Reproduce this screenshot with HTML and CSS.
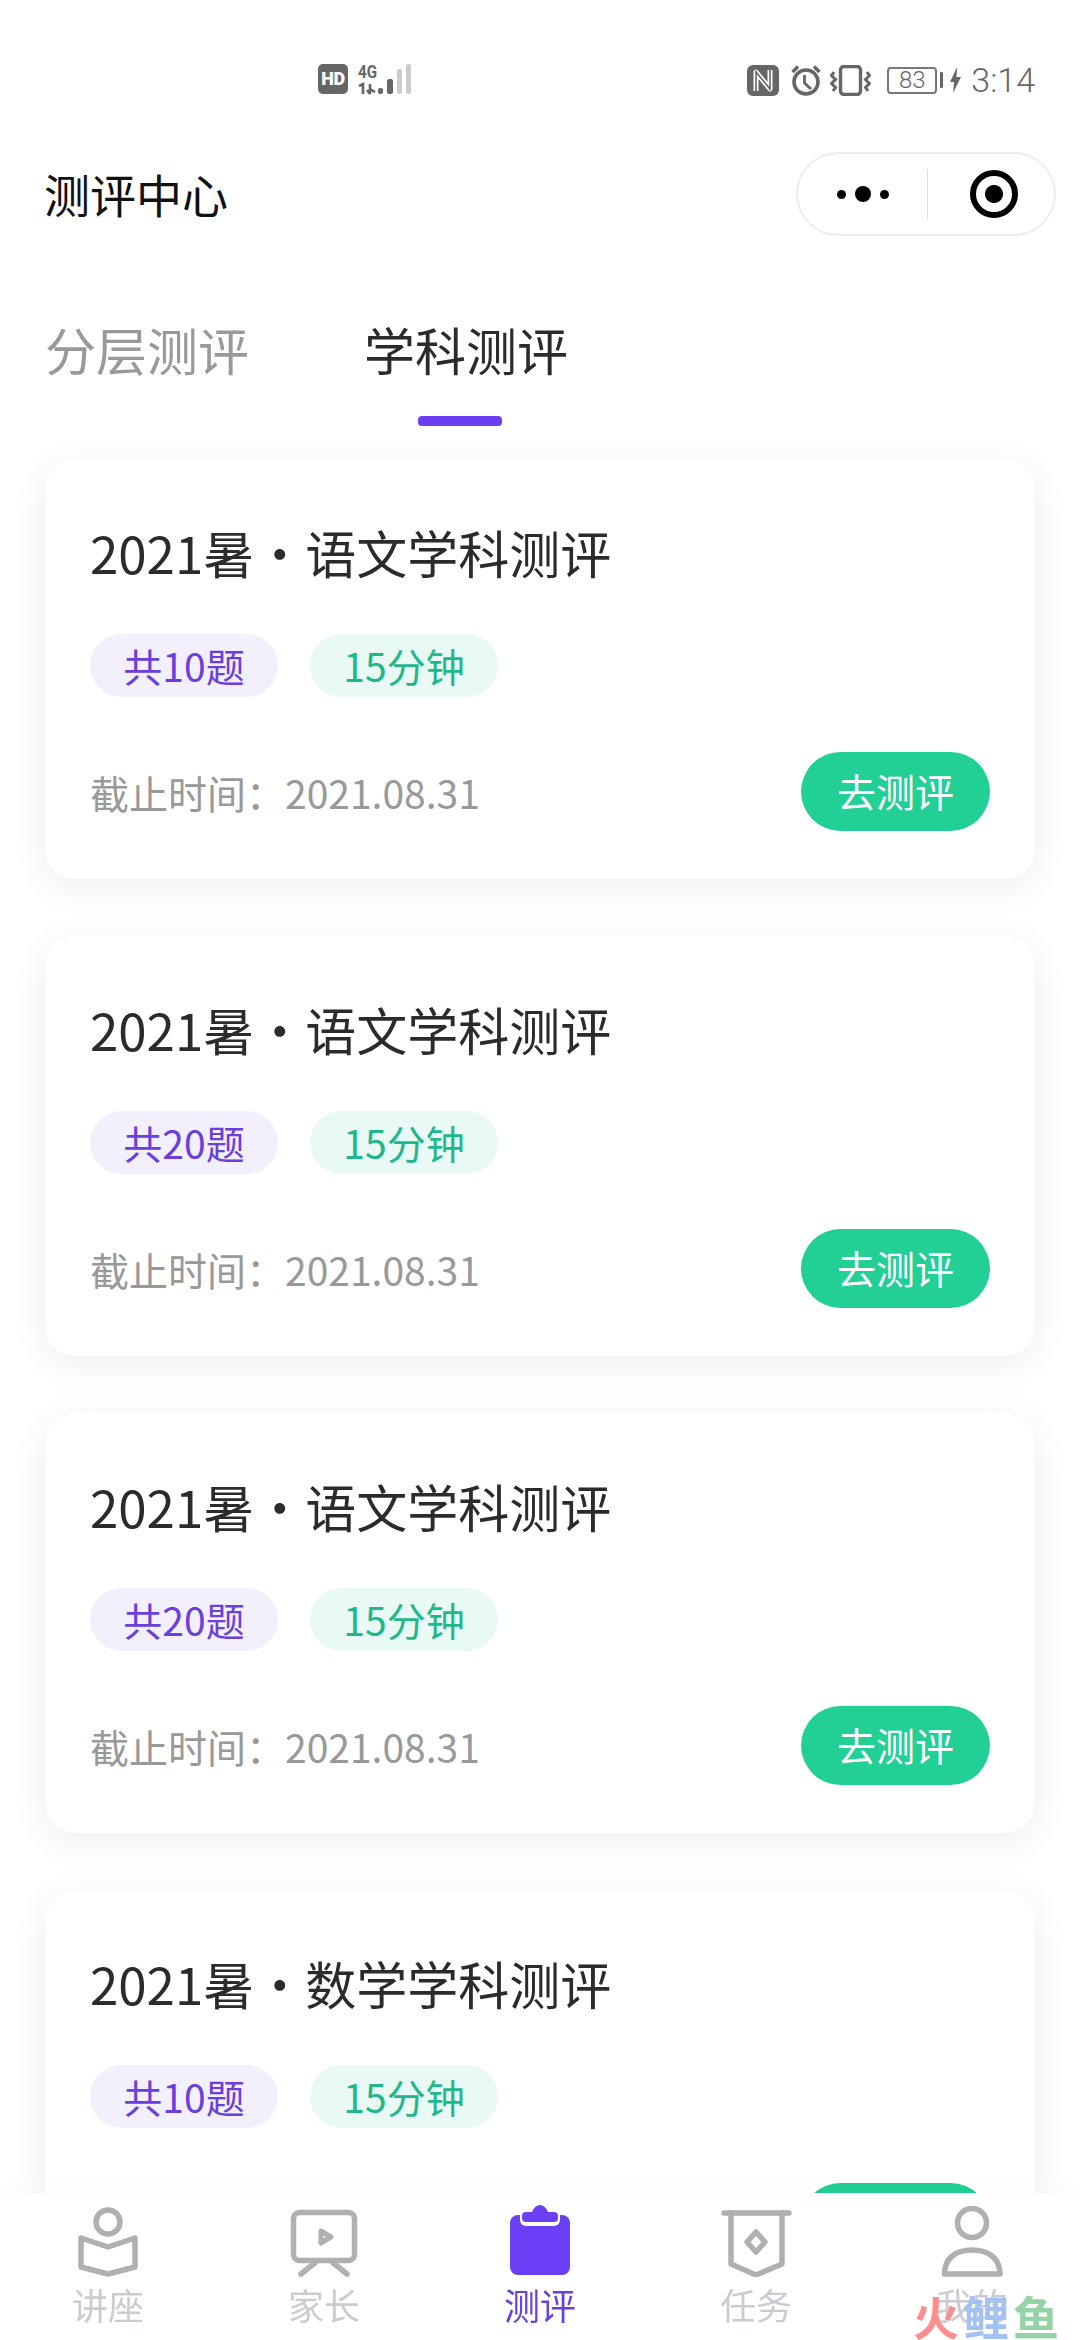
FILE: index.html
```html
<!DOCTYPE html>
<html lang="zh-CN">
  <head>
    <meta charset="UTF-8" />
    <meta name="viewport" content="width=device-width, initial-scale=1.0" />
    <title>测评中心</title>
    <link rel="stylesheet" href="styles.css">
  </head>
  <body>
    <div class="status-bar">
      <div class="status-left">
        <span class="hd-badge">HD</span>
        <svg class="signal" width="62" height="32" viewBox="0 0 62 32">
          <text class="signal-text" x="0" y="15" textLength="19" lengthAdjust="spacingAndGlyphs">4G</text>
          <path d="M1 23 L5 21 V31 M12 21 V31 M12 31 L9 27 M12 26 L17 29" fill="none" stroke="#666" stroke-width="2.6" />
          <rect x="20" y="25" width="5" height="6" rx="2" fill="#666" />
          <rect x="29" y="16" width="6" height="15" rx="2" fill="#666" />
          <rect x="39" y="6" width="5" height="25" rx="2" fill="#ccc" />
          <rect x="48" y="1" width="5" height="30" rx="2" fill="#ccc" />
        </svg>
      </div>
      <div class="status-right">
        <svg width="32" height="31" viewBox="0 0 32 31">
          <rect width="32" height="31" rx="6" fill="#666" />
          <path d="M9 26 V7 L23 24 V5" fill="none" stroke="#fff" stroke-width="5" stroke-linejoin="round" />
          <path d="M9 26 V7 L23 24 V5" fill="none" stroke="#666" stroke-width="1.6" />
        </svg>
        <svg width="30" height="31" viewBox="0 0 30 31">
          <circle cx="15" cy="17" r="12" fill="none" stroke="#666" stroke-width="3.6" />
          <path d="M13.5 10 V18 L20 24" fill="none" stroke="#666" stroke-width="2.8" />
          <path d="M1.5 7 L7 1.5 M28.5 7 L23 1.5" fill="none" stroke="#666" stroke-width="3.4" />
        </svg>
        <svg class="vibrate" width="41" height="31" viewBox="0 0 41 31">
          <rect x="10.5" y="1.5" width="20" height="28" rx="3.5" fill="none" stroke="#666" stroke-width="3.4" />
          <path d="M4 7 L1.5 10.5 L5.5 14.5 L1.5 18.5 L5.5 22.5 L3 26 M37 7 L39.5 10.5 L35.5 14.5 L39.5 18.5 L35.5 22.5 L38 26" fill="none" stroke="#666" stroke-width="3" />
        </svg>
        <div class="battery">
          <span class="battery-box">83</span>
          <span class="battery-nub"></span>
        </div>
        <svg class="bolt" width="11" height="26" viewBox="0 0 11 26">
          <path d="M7 0 L0 15 H4 L3 26 L11 10 H6.5 Z" fill="#666" />
        </svg>
        <span class="status-time">3:14</span>
      </div>
    </div>

    <div class="nav-bar">
      <div class="nav-title">测评中心</div>
      <div class="capsule">
        <div class="capsule-part">
          <span class="dot"></span>
          <span class="dot dot-big"></span>
          <span class="dot"></span>
        </div>
        <div class="capsule-part capsule-close">
          <span class="target"></span>
        </div>
      </div>
    </div>

    <div class="tabs">
      <div class="tab">分层测评</div>
      <div class="tab tab-active">学科测评</div>
    </div>

    <div class="card-list">
      <div class="card">
        <div class="card-title">2021暑・语文学科测评</div>
        <div class="card-tags">
          <span class="tag tag-purple">共10题</span>
          <span class="tag tag-green">15分钟</span>
        </div>
        <div class="card-footer">
          <span class="deadline">截止时间：2021.08.31</span>
          <span class="go-btn">去测评</span>
        </div>
      </div>

      <div class="card">
        <div class="card-title">2021暑・语文学科测评</div>
        <div class="card-tags">
          <span class="tag tag-purple">共20题</span>
          <span class="tag tag-green">15分钟</span>
        </div>
        <div class="card-footer">
          <span class="deadline">截止时间：2021.08.31</span>
          <span class="go-btn">去测评</span>
        </div>
      </div>

      <div class="card">
        <div class="card-title">2021暑・语文学科测评</div>
        <div class="card-tags">
          <span class="tag tag-purple">共20题</span>
          <span class="tag tag-green">15分钟</span>
        </div>
        <div class="card-footer">
          <span class="deadline">截止时间：2021.08.31</span>
          <span class="go-btn">去测评</span>
        </div>
      </div>

      <div class="card">
        <div class="card-title">2021暑・数学学科测评</div>
        <div class="card-tags">
          <span class="tag tag-purple">共10题</span>
          <span class="tag tag-green">15分钟</span>
        </div>
        <div class="card-footer">
          <span class="deadline">截止时间：2021.08.31</span>
          <span class="go-btn">去测评</span>
        </div>
      </div>
    </div>

    <div class="tab-bar">
      <div class="tab-item">
        <svg class="tab-icon" viewBox="0 0 72 72">
          <circle cx="36" cy="17" r="12" />
          <path d="M9 33 L36 42 L63 33 V62 L36 69 L9 62 Z" />
        </svg>
        <span>讲座</span>
      </div>
      <div class="tab-item">
        <svg class="tab-icon" viewBox="0 0 72 72">
          <rect x="5.5" y="7.5" width="61" height="48" rx="6" />
          <path class="thin" d="M33 26 L43 32 L33 38 Z" />
          <path d="M13 69 L28 57 M59 69 L44 57" />
        </svg>
        <span>家长</span>
      </div>
      <div class="tab-item tab-item-active">
        <svg class="tab-icon" viewBox="0 0 72 72">
          <rect class="clip-body" x="6" y="10" width="60" height="60" rx="8" />
          <rect class="clip-head" x="16" y="5" width="40" height="16" rx="6" />
          <path class="clip-top" d="M18 11 Q18 7 22 7 H28 Q31 0 36 0 Q41 0 44 7 H50 Q54 7 54 11 V13 Q54 17 50 17 H22 Q18 17 18 13 Z" />
        </svg>
        <span>测评</span>
      </div>
      <div class="tab-item">
        <svg class="tab-icon" viewBox="0 0 72 72">
          <path d="M4 8 H69" />
          <path d="M11 8 V59 L36 70 L62 59 V8" />
          <path d="M36 27 L45 37 L36 47 L27 37 Z" />
        </svg>
        <span>任务</span>
      </div>
      <div class="tab-item">
        <svg class="tab-icon" viewBox="0 0 72 72">
          <circle cx="36" cy="18" r="14.5" />
          <path d="M8.5 69 C8.5 53 20 45 36 45 C52 45 64 53 64 69 Z" />
        </svg>
        <span>我的</span>
      </div>
    </div>

    <div class="watermark">
      <span class="wm-red">火</span><span class="wm-blue">鲤</span><span class="wm-green">鱼</span>
    </div>
  </body>
</html>
```

FILE: styles.css
```css
* {
  box-sizing: border-box;
}

html,
body {
  margin: 0;
  height: 2340px;
  overflow: hidden;
}

body {
  font-family: "Noto Sans CJK SC", "Noto Sans", sans-serif;
  color: #2b2b2b;
  background-color: #fff;
}

/* status bar */
.status-bar {
  height: 152px;
  padding: 63px 45px 0 318px;
  display: flex;
  justify-content: space-between;
  align-items: flex-start;
}

.status-left,
.status-right {
  display: flex;
  align-items: center;
}

.status-left {
  gap: 10px;
}

.status-right {
  gap: 12px;
}

.hd-badge {
  width: 30px;
  height: 30px;
  background: #666;
  border-radius: 5px;
  color: #fff;
  font-family: "Roboto", sans-serif;
  font-size: 18px;
  font-weight: 900;
  line-height: 30px;
  text-align: center;
  letter-spacing: -0.5px;
}

.signal {
  overflow: visible;
}

.signal-text {
  font-family: "Roboto", sans-serif;
  font-size: 18px;
  font-weight: 700;
  fill: #666;
}

.vibrate {
  margin-left: -3px;
}

.battery {
  display: flex;
  align-items: center;
  gap: 3px;
  margin-left: 4px;
}

.battery-box {
  width: 50px;
  height: 27px;
  border: 2px solid #777;
  border-radius: 4px;
  color: #666;
  font-family: "Roboto", sans-serif;
  font-size: 24px;
  font-weight: 300;
  line-height: 23px;
  text-align: center;
}

.battery-nub {
  width: 3px;
  height: 16px;
  background: #666;
  border-radius: 1px;
}

.bolt {
  margin-left: -5px;
}

.status-time {
  font-family: "Roboto", sans-serif;
  font-size: 34px;
  font-weight: 300;
  line-height: 34px;
  color: #666;
  margin-left: -2px;
}

/* title bar */
.nav-bar {
  height: 84px;
  padding: 0 24px 0 44px;
  display: flex;
  justify-content: space-between;
  align-items: center;
}

.nav-title {
  margin-top: -2px;
  font-size: 46px;
  line-height: 60px;
  color: #111;
}

.capsule {
  width: 260px;
  height: 84px;
  border: 2px solid #eee;
  border-radius: 42px;
  display: flex;
  align-items: center;
}

.capsule-part {
  flex: 1;
  display: flex;
  justify-content: center;
  align-items: center;
  gap: 9px;
}

.capsule-close {
  flex: 0 0 127px;
  height: 50px;
  padding-left: 6px;
  border-left: 1px solid #ddd;
}

.dot {
  width: 9px;
  height: 9px;
  background: #000;
  border-radius: 50%;
}

.dot-big {
  width: 16px;
  height: 16px;
}

.target {
  width: 48px;
  height: 48px;
  border: 6px solid #000;
  border-radius: 50%;
  background: radial-gradient(circle, #000 0, #000 8.5px, #fff 9.5px);
}

/* tabs */
.tabs {
  height: 223px;
  padding: 83px 0 0 45px;
  display: flex;
  gap: 115px;
}

.tab {
  font-size: 51px;
  line-height: 60px;
  color: #999;
}

.tab-active {
  color: #2b2b2b;
}

.tab-active::after {
  content: "";
  display: block;
  width: 84px;
  height: 10px;
  margin: 37px 0 0 54px;
  background: #6a3fef;
  border-radius: 4px;
}

/* cards */
.card-list {
  padding: 0 45px;
  display: flex;
  flex-direction: column;
  gap: 57px;
}

.card {
  height: 420px;
  padding: 63px 45px 48px;
  background: #fff;
  border-radius: 30px;
  box-shadow: 0 8px 36px rgba(0, 0, 0, 0.07);
}

.card-title {
  font-size: 51px;
  line-height: 60px;
  color: #2b2b2b;
}

.card-tags {
  margin-top: 52px;
  display: flex;
  gap: 32px;
}

.tag {
  width: 188px;
  height: 63px;
  border-radius: 32px;
  font-size: 39px;
  line-height: 63px;
  text-align: center;
}

.tag-purple {
  background: #f3f0fd;
  color: #6a3fdc;
}

.tag-green {
  background: #e9f9f4;
  color: #1fb88a;
}

.card-footer {
  margin-top: 55px;
  display: flex;
  justify-content: space-between;
  align-items: center;
}

.deadline {
  font-size: 39px;
  line-height: 50px;
  color: #999;
}

.go-btn {
  width: 189px;
  height: 79px;
  background: #22cf95;
  border-radius: 40px;
  color: #fff;
  font-size: 39px;
  line-height: 77px;
  text-align: center;
}

/* bottom tab bar */
.tab-bar {
  position: fixed;
  left: 0;
  right: 0;
  bottom: 0;
  height: 147px;
  padding-top: 12px;
  display: flex;
  background: #fff;
  box-shadow: 0 -4px 16px rgba(0, 0, 0, 0.02);
}

.tab-item {
  flex: 1;
  display: flex;
  flex-direction: column;
  align-items: center;
  font-size: 36px;
  line-height: 44px;
  color: #c9cdd3;
}

.tab-item-active {
  color: #6a3fdc;
}

.tab-icon {
  width: 72px;
  height: 72px;
  margin-bottom: 5px;
  fill: none;
  stroke: #b0b0b0;
  stroke-width: 5.5;
  stroke-linejoin: round;
  stroke-linecap: round;
}

.tab-icon .thin {
  stroke-width: 5;
}

.clip-body {
  fill: #6a3ff5;
  stroke: none;
}

.clip-head {
  fill: #fff;
  stroke: none;
}

.clip-top {
  fill: #6a3ff5;
  stroke: none;
}

.watermark {
  position: fixed;
  left: 913px;
  top: 2292px;
  font-size: 46px;
  font-weight: 700;
  line-height: 46px;
  letter-spacing: 4px;
  white-space: nowrap;
}

.wm-red {
  color: #ff8f8f;
}

.wm-blue {
  color: #a3c1f2;
}

.wm-green {
  color: #93d3a5;
}
```
